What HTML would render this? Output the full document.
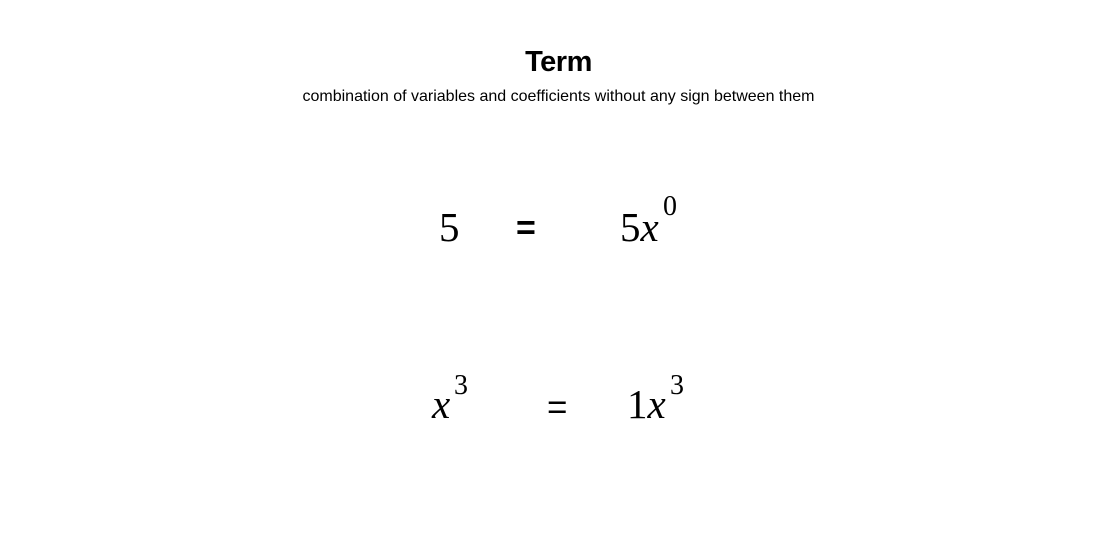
<!DOCTYPE html>
<html><head><style>
body{margin:0;width:1115px;height:547px;background:#fff;position:relative;overflow:hidden;font-family:"Liberation Sans",sans-serif;color:#000}
.a{position:absolute;white-space:nowrap;line-height:1}
.m{font-family:"Liberation Serif",serif;font-size:41px}
.s{font-family:"Liberation Serif",serif;font-size:28px}
i{font-style:italic}
</style></head><body>
<div class="a" style="left:0;width:1117px;text-align:center;top:48px;font-size:29px;font-weight:bold;letter-spacing:-0.5px">Term</div>
<div class="a" style="left:0;width:1117px;text-align:center;top:89px;font-size:16px">combination of variables and coefficients without any sign between them</div>

<div class="a m" style="left:439px;top:207px">5</div>
<div class="a" style="left:516px;top:211px;font-size:34px;font-weight:bold">=</div>
<div class="a m" style="left:620px;top:207px">5<i>x</i></div>
<div class="a s" style="left:663px;top:193px">0</div>

<div class="a m" style="left:432px;top:384px"><i>x</i></div>
<div class="a s" style="left:454px;top:372px">3</div>
<div class="a" style="left:547px;top:390px;font-size:35px">=</div>
<div class="a m" style="left:627px;top:384px">1<i>x</i></div>
<div class="a s" style="left:670px;top:372px">3</div>
</body></html>
